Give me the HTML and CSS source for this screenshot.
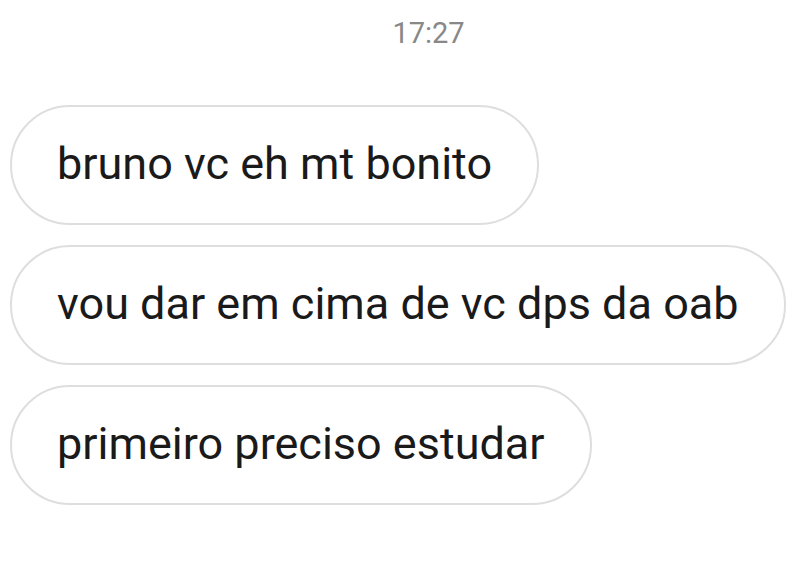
FILE: index.html
```html
<!DOCTYPE html>
<html lang="pt">
<head>
<meta charset="utf-8">
<title>Chat</title>
<link rel="stylesheet" href="styles.css">
</head>
<body>
<div class="chat">
  <div class="time">17:27</div>
  <div class="messages">
    <div class="bubble">bruno vc eh mt bonito</div>
    <div class="bubble">vou dar em cima de vc dps da oab</div>
    <div class="bubble">primeiro preciso estudar</div>
  </div>
</div>
</body>
</html>
```

FILE: styles.css
```css
html, body {
  margin: 0;
  padding: 0;
  background: #ffffff;
}

.chat {
  width: 800px;
  height: 568px;
  padding-top: 16px;
  box-sizing: border-box;
  font-family: Roboto, "Liberation Sans", Arial, sans-serif;
}

.time {
  text-align: center;
  padding-left: 57px;
  font-size: 29px;
  line-height: 34px;
  color: #888888;
}

.messages {
  margin-top: 55px;
  padding-left: 10px;
  display: flex;
  flex-direction: column;
  align-items: flex-start;
  gap: 20px;
}

.bubble {
  box-sizing: border-box;
  height: 120px;
  display: flex;
  align-items: center;
  padding: 0 45px 4px 45px;
  border: 2px solid #dedede;
  border-radius: 60px;
  font-size: 45px;
  color: #1a1a1a;
  white-space: nowrap;
}
```
